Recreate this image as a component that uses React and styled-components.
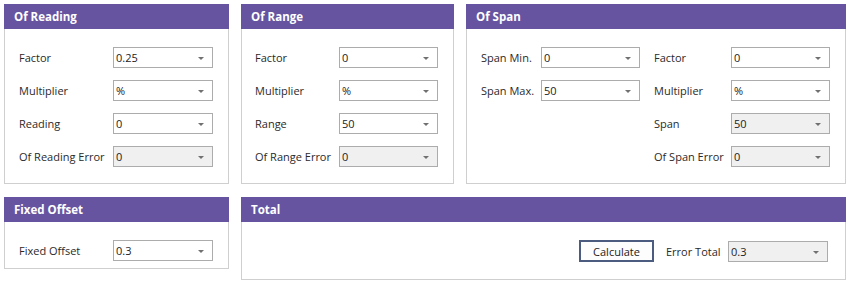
import React from 'react';
import styled, { createGlobalStyle } from 'styled-components';

const GlobalStyle = createGlobalStyle`
    body {
        margin: 0;
        background: #ffffff;
        font-family: "Open Sans", "Noto Sans", sans-serif;
        font-size: 11px;
        color: #222;
    }
`

// Page grid
const Page = styled.div`
    display: grid;
    grid-template-columns: 225px 213px 380px;
    column-gap: 12px;
    row-gap: 13px;
    padding: 4px 5px 0 4px;
    align-items: start;
`

const Panel = styled.div`
    grid-column: ${props => props.span || 'auto'};
    display: flex;
    flex-direction: column;
`

const PanelHeader = styled.div`
    height: 25px;
    background-color: #6654a1;
    color: #fff;
    font-weight: 700;
    font-size: 11.5px;
    line-height: 25px;
    padding-left: 10px;
`

const PanelBody = styled.div`
    border: 1px solid #cfcfcf;
    border-top: none;
    height: ${props => props.height}px;
    box-sizing: border-box;
    padding: ${props => props.pad || '18px 0 0 14px'};
`

const FieldGrid = styled.div`
    display: grid;
    grid-template-columns: ${props => props.cols};
    row-gap: 12px;
    align-items: center;
`

const Label = styled.div`
    white-space: nowrap;
    color: #2a2a2a;
`

const Select = styled.div`
    height: 21px;
    box-sizing: border-box;
    border: 1px solid #acacac;
    background-color: ${props => props.disabled ? '#f0f0f0' : '#fff'};
    display: flex;
    align-items: center;
    padding-left: 2px;
    position: relative;
    color: #222;

    &::after {
        content: '';
        position: absolute;
        right: 8px;
        top: 9px;
        border-left: 3px solid transparent;
        border-right: 3px solid transparent;
        border-top: 3px solid #707070;
    }
`

const TotalRow = styled.div`
    display: flex;
    justify-content: flex-end;
    align-items: center;
    padding-right: 17px;
`

const CalcButton = styled.button`
    width: 75px;
    height: 22px;
    border: 2px solid #4b5c80;
    background: #fdfdfd;
    font-family: inherit;
    font-size: 11px;
    color: #222;
    padding: 0;
    margin-right: 12px;
`

const TotalLabel = styled(Label)`
    width: 62px;
`

const Spacer = styled.div``

const fields = (rows) => rows.map(([label, value, disabled]) => (
    <React.Fragment key={label}>
        <Label>{label}</Label>
        <Select disabled={disabled}>{value}</Select>
    </React.Fragment>
))

function App() {
    return (
        <Page>
            <GlobalStyle />
            <Panel>
                <PanelHeader>Of Reading</PanelHeader>
                <PanelBody height={155}>
                    <FieldGrid cols="94px 100px">
                        {fields([
                            ['Factor', '0.25'],
                            ['Multiplier', '%'],
                            ['Reading', '0'],
                            ['Of Reading Error', '0', true],
                        ])}
                    </FieldGrid>
                </PanelBody>
            </Panel>
            <Panel>
                <PanelHeader>Of Range</PanelHeader>
                <PanelBody height={155} pad="18px 0 0 13px">
                    <FieldGrid cols="84px 99px">
                        {fields([
                            ['Factor', '0'],
                            ['Multiplier', '%'],
                            ['Range', '50'],
                            ['Of Range Error', '0', true],
                        ])}
                    </FieldGrid>
                </PanelBody>
            </Panel>
            <Panel>
                <PanelHeader>Of Span</PanelHeader>
                <PanelBody height={155}>
                    <FieldGrid cols="60px 99px 14px 77px 99px">
                        <Label>Span Min.</Label>
                        <Select>0</Select>
                        <Spacer />
                        <Label>Factor</Label>
                        <Select>0</Select>

                        <Label>Span Max.</Label>
                        <Select>50</Select>
                        <Spacer />
                        <Label>Multiplier</Label>
                        <Select>%</Select>

                        <Spacer />
                        <Spacer />
                        <Spacer />
                        <Label>Span</Label>
                        <Select disabled>50</Select>

                        <Spacer />
                        <Spacer />
                        <Spacer />
                        <Label>Of Span Error</Label>
                        <Select disabled>0</Select>
                    </FieldGrid>
                </PanelBody>
            </Panel>
            <Panel>
                <PanelHeader>Fixed Offset</PanelHeader>
                <PanelBody height={47}>
                    <FieldGrid cols="94px 100px">
                        {fields([['Fixed Offset', '0.3']])}
                    </FieldGrid>
                </PanelBody>
            </Panel>
            <Panel span="2 / 4">
                <PanelHeader>Total</PanelHeader>
                <PanelBody height={58} pad="18px 0 0 0">
                    <TotalRow>
                        <CalcButton>Calculate</CalcButton>
                        <TotalLabel>Error Total</TotalLabel>
                        <Select disabled style={{ width: 100 }}>0.3</Select>
                    </TotalRow>
                </PanelBody>
            </Panel>
        </Page>
    )
}

export default App
